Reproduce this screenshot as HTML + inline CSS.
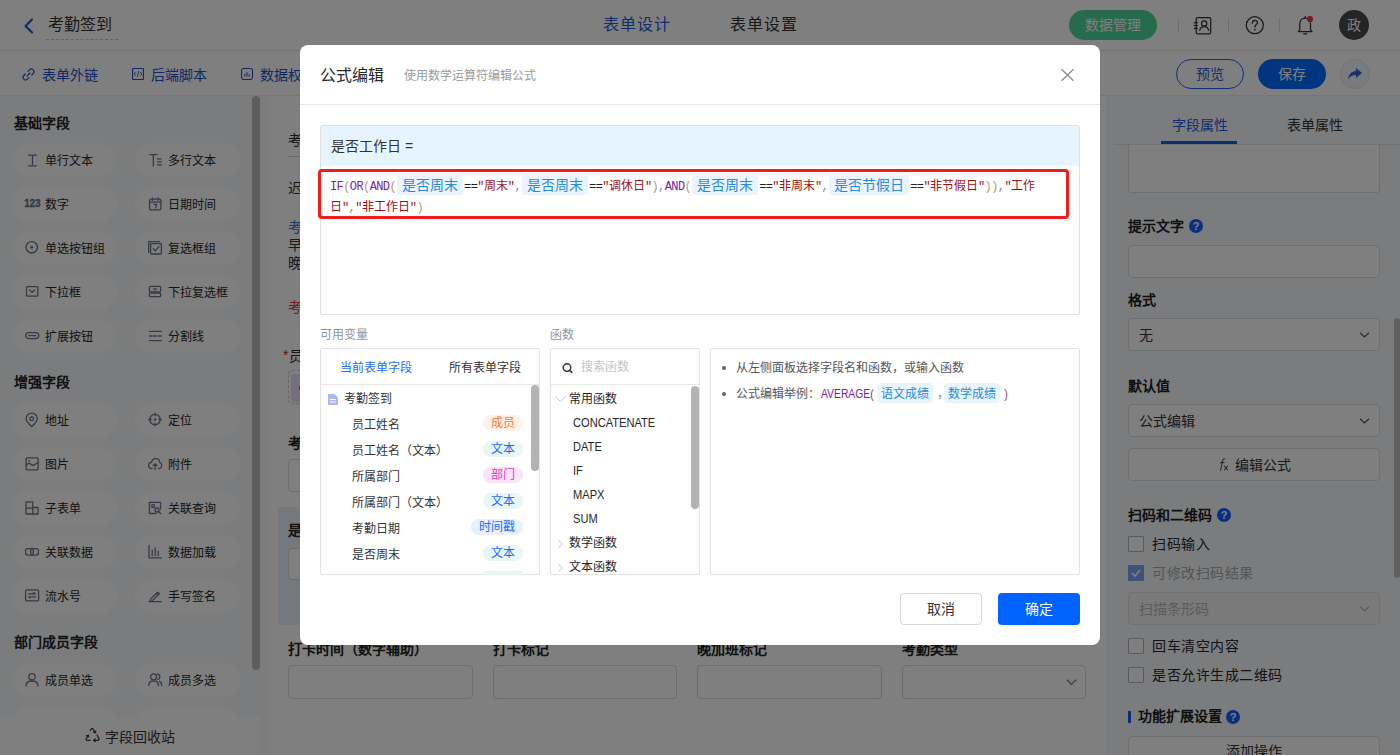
<!DOCTYPE html>
<html lang="zh-CN"><head><meta charset="utf-8">
<style>
*{box-sizing:border-box;margin:0;padding:0}
html,body{width:1400px;height:755px;overflow:hidden;background:#fff}
body{position:relative;font-family:"Liberation Sans",sans-serif;color:#333;font-size:14px}
.a{position:absolute;white-space:nowrap}
.t{position:absolute;white-space:nowrap;line-height:1}
svg{position:absolute;overflow:visible}
/* page */
#hdr{left:0;top:0;width:1400px;height:51px;background:#fff;border-bottom:1px solid #e6e6e6}
#tb{left:0;top:51px;width:1400px;height:45px;background:#fff;border-bottom:1px solid #ececec}
#side{left:0;top:96px;width:268px;height:659px;background:#f7f8fa}
.pill{position:absolute;width:105px;height:34px;border-radius:17px;background:#fff}
.pill span{position:absolute;left:33px;top:11px;font-size:12px;line-height:14px;color:#262626}
.sh{position:absolute;left:14px;font-size:14px;font-weight:bold;color:#222;line-height:14px}
#canvas{left:268px;top:96px;width:838px;height:659px;background:#fff}
#rp{left:1106px;top:96px;width:294px;height:659px;background:#f7f8fa}
#ov{left:0;top:0;width:1400px;height:755px;background:rgba(0,0,0,.5)}
#modal{left:300px;top:45px;width:800px;height:600px;background:#fff;border-radius:8px}
.box{position:absolute;border:1px solid #e3e3e3;border-radius:2px;background:#fff}
.tag{position:absolute;height:16px;border-radius:8px;font-size:12px;line-height:17px;text-align:center}
.vr{position:absolute;left:31px;font-size:12px;line-height:14px;color:#333}
.fn{position:absolute;left:22px;font-size:12px;line-height:14px;color:#262626;transform:scaleX(.925);transform-origin:0 0}
.fn.c{transform:none}
.mono{font-family:"Liberation Mono",monospace;font-size:12px;letter-spacing:-0.6px}
.mono i{font-style:normal;letter-spacing:0}
.sp{display:inline-block;width:0px}
.fp{display:inline-block;background:#eaf4fe;color:#2b8ad8;font-family:"Liberation Sans",sans-serif;font-size:14px;height:20px;line-height:20px;padding:0 5px;border-radius:3px;vertical-align:top;margin:-2px 1px 0 1px;letter-spacing:0}
.kw{color:#7a1ea0}
.pr{color:#b59a6a}
.st{color:#9c1212}
.op{color:#222}
.cm{color:#888}
.inp{position:absolute;border:1px solid #dcdcdc;border-radius:4px;background:#fff}
.rl{position:absolute;left:22px;font-size:14px;font-weight:bold;color:#1f1f1f;line-height:14px;margin-top:-1px}
.cb{position:absolute;left:22px;width:16px;height:16px;border:1px solid #aeb4c0;border-radius:1px;background:#fff}
.cbl{position:absolute;left:46px;font-size:14px;line-height:14px;color:#262626;letter-spacing:0.55px}
.q{position:absolute;width:14px;height:14px;border-radius:7px;background:#1060ff;color:#fff;font-size:11px;font-weight:bold;line-height:14px;text-align:center}
</style></head><body>

<!-- ============ HEADER ============ -->
<div id="hdr" class="a">
  <svg style="left:23px;top:18px" width="11" height="16" viewBox="0 0 11 16"><path d="M9 1.5 L2.5 8 L9 14.5" fill="none" stroke="#1f5bd6" stroke-width="2.2" stroke-linecap="round" stroke-linejoin="round"/></svg>
  <div class="t" style="left:48px;top:17px;font-size:16px;color:#333">考勤签到</div>
  <div class="a" style="left:46px;top:39px;width:72px;border-top:1px dashed #c8c8c8"></div>
  <div class="t" style="left:603px;top:17px;font-size:16px;color:#2659d8;letter-spacing:1px">表单设计</div>
  <div class="t" style="left:730px;top:17px;font-size:16px;color:#333;letter-spacing:1px">表单设置</div>
  <div class="a" style="left:1069px;top:10px;width:88px;height:30px;border-radius:15px;background:#4cd696"></div>
  <div class="t" style="left:1085px;top:18px;font-size:14px;color:#fff">数据管理</div>
  <div class="a" style="left:1178px;top:18px;width:1px;height:14px;background:#ddd"></div>
  <div class="a" style="left:1228px;top:18px;width:1px;height:14px;background:#ddd"></div>
  <div class="a" style="left:1279px;top:18px;width:1px;height:14px;background:#ddd"></div>
  <svg style="left:1188px;top:12px" width="30" height="26" viewBox="0 0 30 26"><g fill="none" stroke="#333" stroke-width="1.25" stroke-linecap="round"><rect x="8.2" y="5.6" width="14.5" height="16.2" rx="1.4"/><path d="M6.3 10.7h3M6.3 13.5h3M6.3 16.3h3"/><circle cx="16.2" cy="11.4" r="2.6"/><path d="M11.7 18.4 C12.3 15.6 14 14.6 16.2 14.6 C18.4 14.6 20.1 15.6 20.7 18.4"/></g></svg>
  <svg style="left:1240px;top:12px" width="30" height="26" viewBox="0 0 30 26"><g fill="none" stroke="#333" stroke-width="1.25" stroke-linecap="round"><circle cx="14.8" cy="13.2" r="8.5"/><path d="M12.3 11.2 C12.3 9.3 13.4 8.3 14.9 8.3 C16.4 8.3 17.4 9.3 17.4 10.7 C17.4 12.5 14.9 12.7 14.9 15"/></g><circle cx="14.9" cy="17.6" r="0.9" fill="#333"/></svg>
  <svg style="left:1290px;top:12px" width="30" height="26" viewBox="0 0 30 26"><g fill="none" stroke="#333" stroke-width="1.25" stroke-linecap="round" stroke-linejoin="round"><path d="M8.3 19.6 H22 L20.5 17.6 V12 C20.5 8.5 18.3 6.2 15.2 6.2 C12.1 6.2 9.8 8.5 9.8 12 V17.6 Z"/><path d="M13.6 21.8 H16.8"/><path d="M15.2 4.6 V5.6"/></g><circle cx="20" cy="7" r="3.1" fill="#ff3434"/></svg>
  <div class="a" style="left:1339px;top:10px;width:30px;height:30px;border-radius:15px;background:#4a4a4a"></div>
  <div class="t" style="left:1347px;top:18px;font-size:14px;color:#fff">政</div>
</div>

<!-- ============ TOOLBAR ============ -->
<div id="tb" class="a">
  <svg style="left:22px;top:17px" width="13" height="13" viewBox="0 0 13 13"><path d="M5 8 L8 5 M6 3.3 L7.5 1.8 a2.55 2.55 0 0 1 3.7 3.7 L9.7 7 M7 9.7 L5.5 11.2 a2.55 2.55 0 0 1 -3.7 -3.7 L3.3 6" fill="none" stroke="#2050c8" stroke-width="1.1" stroke-linecap="round"/></svg>
  <div class="t" style="left:42px;top:17px;font-size:14px;color:#2050c8">表单外链</div>
  <svg style="left:132px;top:17px" width="12" height="12" viewBox="0 0 13 13"><rect x="0.6" y="0.6" width="11.8" height="11.8" rx="0.6" fill="none" stroke="#2050c8" stroke-width="1.15"/><path d="M4 4.3 L2.3 6.5 L4 8.7 M9 4.3 L10.7 6.5 L9 8.7 M7.3 3.5 L5.7 9.5" fill="none" stroke="#2050c8" stroke-width="0.9"/></svg>
  <div class="t" style="left:151px;top:17px;font-size:14px;color:#2050c8">后端脚本</div>
  <svg style="left:241px;top:17px" width="12" height="12" viewBox="0 0 13 13"><rect x="0.6" y="0.6" width="11.8" height="11.8" rx="2" fill="none" stroke="#2050c8" stroke-width="1.15"/><path d="M4.2 9.3V6.3 M6.5 9.3V4.5 M8.8 9.3V6.8" stroke="#2050c8" stroke-width="1.1"/></svg>
  <div class="t" style="left:260px;top:17px;font-size:14px;color:#2050c8">数据权限</div>
  <div class="a" style="left:1176px;top:8px;width:68px;height:30px;border-radius:15px;border:1.5px solid #1a62f0;background:#fff"></div>
  <div class="t" style="left:1196px;top:16px;font-size:14px;color:#2a5bd8">预览</div>
  <div class="a" style="left:1258px;top:8px;width:68px;height:30px;border-radius:15px;background:#006cff"></div>
  <div class="t" style="left:1278px;top:16px;font-size:14px;color:#fff">保存</div>
  <div class="a" style="left:1340px;top:8px;width:30px;height:30px;border-radius:15px;background:#f4f7ff;border:1px solid #dfe7fb"></div>
  <svg style="left:1347px;top:16px" width="16" height="14" viewBox="0 0 16 14"><path d="M9 1 L15 6 L9 11 V8 C5 8 2.5 9.5 1 12.5 C1.5 7.5 4.5 4.5 9 4 Z" fill="#2a63e0"/></svg>
</div>

<!-- ============ SIDEBAR ============ -->
<div id="side" class="a">
  <div class="sh" style="top:20px">基础字段</div>
  <div class="pill" style="left:12px;top:47px"><svg style="left:13px;top:10px" width="14" height="14" viewBox="0 0 14 14"><path d="M3.5 2.2h8M7.5 2.2v10.6M3.5 12.8h8" fill="none" stroke="#6b7489" stroke-width="1.3" stroke-linecap="round" stroke-linejoin="round"/></svg><span>单行文本</span></div>
  <div class="pill" style="left:135px;top:47px"><svg style="left:13px;top:10px" width="14" height="14" viewBox="0 0 14 14"><path d="M1.7 1.6H9M5.3 1.6V13M9.5 5.8h3.7M9.5 8.8h3.7M9.5 11.8h3.7" fill="none" stroke="#6b7489" stroke-width="1.3" stroke-linecap="round" stroke-linejoin="round"/></svg><span>多行文本</span></div>
  <div class="pill" style="left:12px;top:91px"><svg style="left:13px;top:10px" width="14" height="14" viewBox="0 0 14 14"><text x="-0.8" y="10.2" font-family="Liberation Sans" font-weight="700" font-size="10" fill="#6b7489" stroke="#6b7489" stroke-width="0.35" letter-spacing="-0.2">123</text></svg><span>数字</span></div>
  <div class="pill" style="left:135px;top:91px"><svg style="left:13px;top:10px" width="14" height="14" viewBox="0 0 14 14"><rect x="1.6" y="2.2" width="11.3" height="10.6" rx="1.3" fill="none" stroke="#6b7489" stroke-width="1.3" stroke-linecap="round" stroke-linejoin="round"/><path d="M1.6 5.2h11.3M4.5 0.8v2.6M10 0.8v2.6M5.8 7.4h3L7.3 11" fill="none" stroke="#6b7489" stroke-width="1.3" stroke-linecap="round" stroke-linejoin="round"/></svg><span>日期时间</span></div>
  <div class="pill" style="left:12px;top:135px"><svg style="left:13px;top:10px" width="14" height="14" viewBox="0 0 14 14"><circle cx="6.7" cy="6.3" r="5.7" fill="none" stroke="#6b7489" stroke-width="1.3" stroke-linecap="round" stroke-linejoin="round"/><circle cx="6.7" cy="6.3" r="1.4" fill="#6b7489"/></svg><span>单选按钮组</span></div>
  <div class="pill" style="left:135px;top:135px"><svg style="left:13px;top:10px" width="14" height="14" viewBox="0 0 14 14"><path d="M0.7 11.5V0.7H11.5" fill="none" stroke="#6b7489" stroke-width="1.3" stroke-linecap="round" stroke-linejoin="round"/><rect x="2.6" y="2.6" width="10.8" height="10.4" rx="0.5" fill="none" stroke="#6b7489" stroke-width="1.3" stroke-linecap="round" stroke-linejoin="round"/><path d="M5.2 7.6 L7.3 9.7 L11 5.6" fill="none" stroke="#6b7489" stroke-width="1.3" stroke-linecap="round" stroke-linejoin="round"/></svg><span>复选框组</span></div>
  <div class="pill" style="left:12px;top:179px"><svg style="left:13px;top:10px" width="14" height="14" viewBox="0 0 14 14"><rect x="1.5" y="1.6" width="11.3" height="9.5" rx="0.8" fill="none" stroke="#6b7489" stroke-width="1.3" stroke-linecap="round" stroke-linejoin="round"/><path d="M4.6 5 L7.1 7.3 L9.6 5" fill="none" stroke="#6b7489" stroke-width="1.3" stroke-linecap="round" stroke-linejoin="round"/></svg><span>下拉框</span></div>
  <div class="pill" style="left:135px;top:179px"><svg style="left:13px;top:10px" width="14" height="14" viewBox="0 0 14 14"><rect x="1.4" y="1.4" width="11.2" height="5.6" rx="1" fill="none" stroke="#6b7489" stroke-width="1.3" stroke-linecap="round" stroke-linejoin="round"/><rect x="1.4" y="8.1" width="11.2" height="3.6" rx="1" fill="none" stroke="#6b7489" stroke-width="1.3" stroke-linecap="round" stroke-linejoin="round"/><path d="M5.8 3.8 L7 5 L8.2 3.8" fill="none" stroke="#6b7489" stroke-width="1.3" stroke-linecap="round" stroke-linejoin="round"/></svg><span>下拉复选框</span></div>
  <div class="pill" style="left:12px;top:223px"><svg style="left:13px;top:10px" width="14" height="14" viewBox="0 0 14 14"><rect x="0.8" y="3.6" width="13" height="6" rx="3" fill="none" stroke="#6b7489" stroke-width="1.3" stroke-linecap="round" stroke-linejoin="round"/><path d="M3.8 6.6h7" fill="none" stroke="#6b7489" stroke-width="1.3" stroke-linecap="round" stroke-linejoin="round"/></svg><span>扩展按钮</span></div>
  <div class="pill" style="left:135px;top:223px"><svg style="left:13px;top:10px" width="14" height="14" viewBox="0 0 14 14"><path d="M1.5 2.3h11.7M1.5 7h2.8M5.8 7h2.8M10.2 7h3M1.5 11.7h11.7" fill="none" stroke="#6b7489" stroke-width="1.3" stroke-linecap="round" stroke-linejoin="round"/></svg><span>分割线</span></div>
  <div class="sh" style="top:279px">增强字段</div>
  <div class="pill" style="left:12px;top:307px"><svg style="left:13px;top:10px" width="14" height="14" viewBox="0 0 14 14"><path d="M6.7 13.6 C3 10.2 1.1 7.8 1.1 5.7 A5.6 5.6 0 0 1 12.3 5.7 C12.3 7.8 10.4 10.2 6.7 13.6 Z" fill="none" stroke="#6b7489" stroke-width="1.3" stroke-linecap="round" stroke-linejoin="round"/><circle cx="6.7" cy="5.8" r="1.8" fill="none" stroke="#6b7489" stroke-width="1.3" stroke-linecap="round" stroke-linejoin="round"/></svg><span>地址</span></div>
  <div class="pill" style="left:135px;top:307px"><svg style="left:13px;top:10px" width="14" height="14" viewBox="0 0 14 14"><circle cx="7" cy="6.5" r="5.2" fill="none" stroke="#6b7489" stroke-width="1.3" stroke-linecap="round" stroke-linejoin="round"/><path d="M7 0.2v2.4M7 10.4v2.4M0.7 6.5h2.4M10.9 6.5h2.4" fill="none" stroke="#6b7489" stroke-width="1.3" stroke-linecap="round" stroke-linejoin="round"/><circle cx="7" cy="6.5" r="1.2" fill="#6b7489"/></svg><span>定位</span></div>
  <div class="pill" style="left:12px;top:351px"><svg style="left:13px;top:10px" width="14" height="14" viewBox="0 0 14 14"><rect x="1.1" y="0.8" width="12" height="12" rx="1.3" fill="none" stroke="#6b7489" stroke-width="1.3" stroke-linecap="round" stroke-linejoin="round"/><path d="M1.3 8.5 C3 6 4.5 5.5 6 7.5 C7.5 9.3 9.5 8 12.9 5.5" fill="none" stroke="#6b7489" stroke-width="1.3" stroke-linecap="round" stroke-linejoin="round"/><circle cx="4" cy="3.8" r="0.9" fill="#6b7489"/></svg><span>图片</span></div>
  <div class="pill" style="left:135px;top:351px"><svg style="left:13px;top:10px" width="14" height="14" viewBox="0 0 14 14"><path d="M4 11.5 C2 11.5 0.6 10.2 0.6 8.4 C0.6 6.7 1.9 5.4 3.5 5.3 C4 3 5.6 1.7 7.6 1.7 C9.9 1.7 11.6 3.4 11.8 5.6 C13 5.9 13.7 7 13.7 8.3 C13.7 10.1 12.4 11.5 10.4 11.5" fill="none" stroke="#6b7489" stroke-width="1.3" stroke-linecap="round" stroke-linejoin="round"/><path d="M7.1 12.5V6.8M5.2 8.6 L7.1 6.8 L9 8.6" fill="none" stroke="#6b7489" stroke-width="1.3" stroke-linecap="round" stroke-linejoin="round"/></svg><span>附件</span></div>
  <div class="pill" style="left:12px;top:395px"><svg style="left:13px;top:10px" width="14" height="14" viewBox="0 0 14 14"><path d="M1 0.9 H7.8 V6.5 H13 V13 H1 Z M1 7.2 H7.8 M7.8 6.5 V13" fill="none" stroke="#6b7489" stroke-width="1.3" stroke-linecap="round" stroke-linejoin="round"/></svg><span>子表单</span></div>
  <div class="pill" style="left:135px;top:395px"><svg style="left:13px;top:10px" width="14" height="14" viewBox="0 0 14 14"><path d="M12.5 8 V1.4 H1.4 V12.5 H8" fill="none" stroke="#6b7489" stroke-width="1.3" stroke-linecap="round" stroke-linejoin="round"/><path d="M3.8 3.8h2.6v2.6H3.8z" fill="none" stroke="#6b7489" stroke-width="1.3" stroke-linecap="round" stroke-linejoin="round"/><circle cx="9" cy="9" r="2" fill="none" stroke="#6b7489" stroke-width="1.3" stroke-linecap="round" stroke-linejoin="round"/><path d="M10.5 10.5 L12.8 12.8" fill="none" stroke="#6b7489" stroke-width="1.3" stroke-linecap="round" stroke-linejoin="round"/></svg><span>关联查询</span></div>
  <div class="pill" style="left:12px;top:439px"><svg style="left:13px;top:10px" width="14" height="14" viewBox="0 0 14 14"><rect x="0.6" y="3.6" width="7.6" height="6.5" rx="2" fill="none" stroke="#6b7489" stroke-width="1.3" stroke-linecap="round" stroke-linejoin="round"/><rect x="5.8" y="3.6" width="7.6" height="6.5" rx="2" fill="none" stroke="#6b7489" stroke-width="1.3" stroke-linecap="round" stroke-linejoin="round"/></svg><span>关联数据</span></div>
  <div class="pill" style="left:135px;top:439px"><svg style="left:13px;top:10px" width="14" height="14" viewBox="0 0 14 14"><path d="M1 0.3V12.8H13.4M4.2 5.2v5.5M7.2 3v7.7M10.2 6.2v4.5" fill="none" stroke="#6b7489" stroke-width="1.3" stroke-linecap="round" stroke-linejoin="round"/></svg><span>数据加载</span></div>
  <div class="pill" style="left:12px;top:483px"><svg style="left:13px;top:10px" width="14" height="14" viewBox="0 0 14 14"><rect x="0.6" y="0.9" width="13" height="11" rx="1.3" fill="none" stroke="#6b7489" stroke-width="1.3" stroke-linecap="round" stroke-linejoin="round"/><path d="M3.5 4.8h6.8l-1.6-1.3M10.5 7.8H3.7l1.6 1.3" fill="none" stroke="#6b7489" stroke-width="1.3" stroke-linecap="round" stroke-linejoin="round"/></svg><span>流水号</span></div>
  <div class="pill" style="left:135px;top:483px"><svg style="left:13px;top:10px" width="14" height="14" viewBox="0 0 14 14"><path d="M2.5 10.2 L9.6 3.1 L11.3 4.8 L4.2 11.9 L2.2 12.3 Z M8.4 4.3 L10.1 6" fill="none" stroke="#6b7489" stroke-width="1.3" stroke-linecap="round" stroke-linejoin="round"/><path d="M1 12.6h12.4" fill="none" stroke="#6b7489" stroke-width="1.3" stroke-linecap="round" stroke-linejoin="round"/></svg><span>手写签名</span></div>
  <div class="sh" style="top:539px">部门成员字段</div>
  <div class="pill" style="left:12px;top:567px"><svg style="left:13px;top:10px" width="14" height="14" viewBox="0 0 14 14"><circle cx="7" cy="3.8" r="3.2" fill="none" stroke="#6b7489" stroke-width="1.3" stroke-linecap="round" stroke-linejoin="round"/><path d="M1 13 C1 9.8 3.6 8 7 8 C10.4 8 13 9.8 13 13" fill="none" stroke="#6b7489" stroke-width="1.3" stroke-linecap="round" stroke-linejoin="round"/></svg><span>成员单选</span></div>
  <div class="pill" style="left:135px;top:567px"><svg style="left:13px;top:10px" width="14" height="14" viewBox="0 0 14 14"><circle cx="5.6" cy="3.8" r="3" fill="none" stroke="#6b7489" stroke-width="1.3" stroke-linecap="round" stroke-linejoin="round"/><path d="M0.8 12.5 C0.8 9.6 2.8 7.9 5.6 7.9 C8.4 7.9 10.4 9.6 10.4 12.5M9.4 0.9 C10.9 1.2 11.9 2.4 11.9 3.8 C11.9 5.1 11 6.2 9.7 6.6M11.4 8.3 C12.9 9 13.8 10.5 13.8 12.5" fill="none" stroke="#6b7489" stroke-width="1.3" stroke-linecap="round" stroke-linejoin="round"/></svg><span>成员多选</span></div>
  <div class="pill" style="left:12px;top:611px"></div>
  <div class="pill" style="left:135px;top:611px"></div>
  <div class="a" style="left:252px;top:0;width:8px;height:574px;border-radius:4px;background:#bdbdbd"></div>
  <div class="a" style="left:0;top:621px;width:260px;height:38px;background:#fff"></div>
  <svg style="left:85px;top:632px" width="15" height="14" viewBox="0 0 15 14"><g fill="none" stroke="#333" stroke-width="1.2" stroke-linecap="round" stroke-linejoin="round"><path d="M5.3 2.6 L6.3 1 Q7.2 -0.2 8.1 1 L10.2 4.6"/><path d="M8.6 4.3 L10.3 4.7 L10.9 3"/><path d="M12 7 L13.8 10.2 Q14.5 11.6 13 12.3 L8.8 12.3"/><path d="M10.2 10.9 L8.7 12.3 L10.2 13.6"/><path d="M5.2 12.3 L2 12.3 Q0.5 12.2 1.2 10.7 L3.2 7.3"/><path d="M1.4 7.8 L3.2 7.2 L3.8 8.9"/></g></svg>
  <div class="t" style="left:105px;top:634px;font-size:14px;color:#333">字段回收站</div>
</div>

<!-- ============ CANVAS ============ -->
<div id="canvas" class="a">
  <div class="t" style="left:20px;top:37px;font-size:14px;color:#222">考勤签到</div>
  <div class="a" style="left:20px;top:60px;width:800px;height:1px;background:#d6d6d6"></div>
  <div class="t" style="left:20px;top:85px;font-size:14px;color:#333">迟到</div>
  <div class="t" style="left:20px;top:124px;font-size:14px;color:#2a7ad8">考勤</div>
  <div class="t" style="left:20px;top:142px;font-size:14px;color:#333">早上</div>
  <div class="t" style="left:20px;top:160px;font-size:14px;color:#333">晚上</div>
  <div class="t" style="left:20px;top:204px;font-size:14px;color:#d83b3b">考勤</div>
  <div class="t" style="left:15px;top:252px;font-size:14px;color:#e02020">*</div>
  <div class="t" style="left:21px;top:253px;font-size:14px;color:#222">员工</div>
  <div class="a" style="left:20px;top:274px;width:180px;height:34px;border:1px dashed #cfcfcf;border-radius:4px"></div>
  <div class="a" style="left:23px;top:278px;width:60px;height:28px;border-radius:3px;background:#e9def0"></div><div class="a" style="left:31px;top:289px;width:6px;height:6px;border-radius:3px;background:#2fb36a"></div>
  <div class="t" style="left:20px;top:340px;font-size:14px;font-weight:bold;color:#222">考勤</div>
  <div class="inp" style="left:20px;top:363px;width:184px;height:33px"></div>
  <div class="a" style="left:10px;top:411px;width:820px;height:118px;background:#eaf0fb"></div>
  <div class="t" style="left:20px;top:427px;font-size:14px;font-weight:bold;color:#222">是否</div>
  <div class="inp" style="left:20px;top:452px;width:184px;height:32px"></div>
  <div class="t" style="left:20px;top:546px;font-size:14px;font-weight:bold;color:#222">打卡时间（数字辅助）</div>
  <div class="t" style="left:225px;top:546px;font-size:14px;font-weight:bold;color:#222">打卡标记</div>
  <div class="t" style="left:429px;top:546px;font-size:14px;font-weight:bold;color:#222">晚加班标记</div>
  <div class="t" style="left:634px;top:546px;font-size:14px;font-weight:bold;color:#222">考勤类型</div>
  <div class="inp" style="left:20px;top:569px;width:185px;height:34px"></div>
  <div class="inp" style="left:225px;top:569px;width:184px;height:34px"></div>
  <div class="inp" style="left:429px;top:569px;width:185px;height:34px"></div>
  <div class="inp" style="left:634px;top:569px;width:184px;height:34px"></div>
  <svg style="left:798px;top:583px" width="11" height="6" viewBox="0 0 11 6"><path d="M0.8 0.8 L5.5 5.2 L10.2 0.8" fill="none" stroke="#777" stroke-width="1.2"/></svg>
</div>

<!-- ============ RIGHT PANEL ============ -->
<div id="rp" class="a">
  <div class="t" style="left:66px;top:22px;font-size:14px;color:#2659d8">字段属性</div>
  <div class="t" style="left:181px;top:22px;font-size:14px;color:#333">表单属性</div>
  <div class="a" style="left:8px;top:48px;width:286px;height:1px;background:#e3e3e3"></div>
  <div class="a" style="left:55px;top:45px;width:76px;height:3px;background:#1a5ae0"></div>
  <div class="inp" style="left:22px;top:49px;width:252px;height:48px;border-top:none;border-radius:0 0 4px 4px"></div>
  <div class="rl" style="top:124px">提示文字</div>
  <div class="q" style="left:83px;top:123px">?</div>
  <div class="inp" style="left:22px;top:149px;width:252px;height:33px"></div>
  <div class="rl" style="top:198px">格式</div>
  <div class="inp" style="left:22px;top:222px;width:252px;height:33px"></div>
  <div class="t" style="left:33px;top:232px;font-size:14px;color:#333">无</div>
  <svg style="left:253px;top:236px" width="11" height="6" viewBox="0 0 11 6"><path d="M1 0.8 L5.5 5 L10 0.8" fill="none" stroke="#555" stroke-width="1.2"/></svg>
  <div class="rl" style="top:284px">默认值</div>
  <div class="inp" style="left:22px;top:308px;width:252px;height:33px"></div>
  <div class="t" style="left:33px;top:318px;font-size:14px;color:#333">公式编辑</div>
  <svg style="left:253px;top:322px" width="11" height="6" viewBox="0 0 11 6"><path d="M1 0.8 L5.5 5 L10 0.8" fill="none" stroke="#555" stroke-width="1.2"/></svg>
  <div class="inp" style="left:22px;top:352px;width:252px;height:33px"></div>
  <svg style="left:112px;top:362px" width="12" height="13" viewBox="0 0 12 13"><path d="M6.8 0.8 C5.6 0.6 4.9 1.2 4.6 2.6 L2.6 12.3 M2.6 4.6 H6" fill="none" stroke="#555" stroke-width="1.05" stroke-linecap="round"/><path d="M6.5 8 L9.6 11.8 M9.6 8 L6.5 11.8" fill="none" stroke="#555" stroke-width="1.05" stroke-linecap="round"/></svg>
  <div class="t" style="left:129px;top:362px;font-size:14px;color:#333">编辑公式</div>
  <div class="rl" style="top:413px">扫码和二维码</div>
  <div class="q" style="left:111px;top:412px">?</div>
  <div class="cb" style="top:440px"></div>
  <div class="cbl" style="top:441px">扫码输入</div>
  <div class="cb" style="top:469px;background:#7aa5f2;border-color:#7aa5f2"></div>
  <svg style="left:25px;top:473px" width="10" height="8" viewBox="0 0 10 8"><path d="M1 4 L4 7 L9 1" fill="none" stroke="#fff" stroke-width="1.6"/></svg>
  <div class="cbl" style="top:470px;color:#aaa">可修改扫码结果</div>
  <div class="inp" style="left:22px;top:496px;width:252px;height:33px;background:#f5f5f5;border-color:#e3e3e3"></div>
  <div class="t" style="left:33px;top:506px;font-size:14px;color:#b8b8b8">扫描条形码</div>
  <svg style="left:253px;top:510px" width="11" height="6" viewBox="0 0 11 6"><path d="M1 0.8 L5.5 5 L10 0.8" fill="none" stroke="#bbb" stroke-width="1.2"/></svg>
  <div class="cb" style="top:542px"></div>
  <div class="cbl" style="top:543px">回车清空内容</div>
  <div class="cb" style="top:571px"></div>
  <div class="cbl" style="top:572px">是否允许生成二维码</div>
  <div class="a" style="left:22px;top:615px;width:3px;height:12px;background:#1a5ae0"></div>
  <div class="rl" style="left:32px;top:614px">功能扩展设置</div>
  <div class="q" style="left:120px;top:614px">?</div>
  <div class="inp" style="left:22px;top:640px;width:252px;height:33px"></div>
  <div class="t" style="left:120px;top:648px;font-size:14px;color:#333">添加操作</div>
  <div class="a" style="left:288px;top:222px;width:6px;height:260px;border-radius:3px;background:#c0c0c0"></div>
</div>

<div id="ov" class="a"></div>

<!-- ============ MODAL ============ -->
<div id="modal" class="a">
  <div class="t" style="left:20px;top:23px;font-size:16px;color:#262626">公式编辑</div>
  <div class="t" style="left:104px;top:25px;font-size:12px;color:#9a9a9a">使用数学运算符编辑公式</div>
  <svg style="left:761px;top:24px" width="13" height="12" viewBox="0 0 13 12"><path d="M0.5 0.3 L12.5 11.7 M12.5 0.3 L0.5 11.7" stroke="#8a8a8a" stroke-width="1.2"/></svg>
  <div class="a" style="left:0;top:59px;width:800px;height:1px;background:#e8e8e8"></div>

  <div class="box" style="left:20px;top:80px;width:760px;height:190px;border-color:#e0e0e0"></div>
  <div class="a" style="left:21px;top:81px;width:758px;height:40px;background:#e6f4ff"></div>
  <div class="t" style="left:31px;top:94px;font-size:14px;color:#333">是否工作日 =</div>
  <div class="a mono" style="left:30px;top:132px;width:740px;line-height:21px;white-space:nowrap"><span class="kw">IF</span><span class="pr">(</span><span class="kw">OR</span><span class="pr">(</span><span class="kw">AND</span><span class="pr">(</span><span class="fp">是否周末</span><span class="op">==</span><span class="st">"<i>周末</i>"</span><span class="cm">,</span><span class="sp"></span><span class="fp">是否周末</span><span class="op">==</span><span class="st">"<i>调休日</i>"</span><span class="pr">)</span><span class="cm">,</span><span class="kw">AND</span><span class="pr">(</span><span class="fp">是否周末</span><span class="op">==</span><span class="st">"<i>非周末</i>"</span><span class="cm">,</span><span class="sp"></span><span class="fp">是否节假日</span><span class="op">==</span><span class="st">"<i>非节假日</i>"</span><span class="pr">))</span><span class="cm">,</span><span class="st">"<i>工作</i></span><br><span class="st"><i>日</i>"</span><span class="cm">,</span><span class="st">"<i>非工作日</i>"</span><span class="pr">)</span></div>
  <div class="a" style="left:17.5px;top:124px;width:751px;height:50px;border:3px solid #f21c1c;border-radius:4px"></div>

  <div class="t" style="left:20px;top:284px;font-size:12px;color:#8b95a7">可用变量</div>
  <div class="t" style="left:250px;top:284px;font-size:12px;color:#8b95a7">函数</div>

  <div class="box" style="left:20px;top:303px;width:220px;height:227px">
    <div class="t" style="left:19px;top:13px;font-size:12px;color:#1f6bff">当前表单字段</div>
    <div class="t" style="left:128px;top:13px;font-size:12px;color:#333">所有表单字段</div>
    <div class="a" style="left:0;top:35px;width:218px;height:1px;background:#e6e6e6"></div>
    <svg style="left:7px;top:45px" width="10" height="11" viewBox="0 0 10 11"><path d="M0 0 H6.5 L10 3.5 V11 H0 Z" fill="#a9b8f5"/><path d="M2 5.5 H8 M2 8 H8" stroke="#fff" stroke-width="1"/></svg>
    <div class="vr" style="left:23px;top:43px">考勤签到</div>
    <div class="vr" style="top:69px">员工姓名</div>
    <div class="tag" style="left:162px;top:66px;width:40px;background:#fff0e8;color:#f57c2b">成员</div>
    <div class="vr" style="top:95px">员工姓名（文本）</div>
    <div class="tag" style="left:162px;top:92px;width:40px;background:#e6f7f5;color:#1f6bff">文本</div>
    <div class="vr" style="top:121px">所属部门</div>
    <div class="tag" style="left:162px;top:118px;width:40px;background:#fbe3f8;color:#d43ac4">部门</div>
    <div class="vr" style="top:147px">所属部门（文本）</div>
    <div class="tag" style="left:162px;top:144px;width:40px;background:#e6f7f5;color:#1f6bff">文本</div>
    <div class="vr" style="top:173px">考勤日期</div>
    <div class="tag" style="left:150px;top:170px;width:52px;background:#e8efff;color:#1f6bff">时间戳</div>
    <div class="vr" style="top:199px">是否周末</div>
    <div class="tag" style="left:162px;top:196px;width:40px;background:#e6f7f5;color:#1f6bff">文本</div>
    <div class="tag" style="left:162px;top:222px;width:40px;height:4px;background:#e6f7f5"></div>
    <div class="a" style="left:210px;top:36px;width:8px;height:86px;border-radius:4px;background:#b3b3b3"></div>
  </div>

  <div class="box" style="left:250px;top:303px;width:150px;height:227px">
    <svg style="left:11px;top:14px" width="11" height="10" viewBox="0 0 11 10"><circle cx="5" cy="4.6" r="3.8" fill="none" stroke="#333" stroke-width="1.5"/><path d="M7.6 7.3 L9.8 9.3" stroke="#333" stroke-width="1.6" stroke-linecap="round"/></svg>
    <div class="t" style="left:30px;top:12px;font-size:12px;color:#c4c4c4">搜索函数</div>
    <div class="a" style="left:0;top:35px;width:148px;height:1px;background:#e6e6e6"></div>
    <svg style="left:4px;top:47px" width="11" height="6" viewBox="0 0 11 6"><path d="M0.5 0.5 L5.5 5.5 L10.5 0.5" fill="none" stroke="#c4c4c4" stroke-width="1"/></svg>
    <div class="fn c" style="left:18px;top:43px">常用函数</div>
    <div class="fn" style="top:67px">CONCATENATE</div>
    <div class="fn" style="top:91px">DATE</div>
    <div class="fn" style="top:115px">IF</div>
    <div class="fn" style="top:139px">MAPX</div>
    <div class="fn" style="top:163px">SUM</div>
    <svg style="left:7px;top:191px" width="5" height="8" viewBox="0 0 5 8"><path d="M0.5 0.5 L4.5 4 L0.5 7.5" fill="none" stroke="#c4c4c4" stroke-width="1"/></svg>
    <div class="fn c" style="left:18px;top:187px">数学函数</div>
    <svg style="left:7px;top:215px" width="5" height="8" viewBox="0 0 5 8"><path d="M0.5 0.5 L4.5 4 L0.5 7.5" fill="none" stroke="#c4c4c4" stroke-width="1"/></svg>
    <div class="fn c" style="left:18px;top:211px">文本函数</div>
    <div class="a" style="left:140px;top:37px;width:8px;height:123px;border-radius:4px;background:#b3b3b3"></div>
  </div>

  <div class="box" style="left:410px;top:303px;width:370px;height:227px">
    <div class="a" style="left:11px;top:17px;width:4px;height:4px;border-radius:2px;background:#5c6470"></div>
    <div class="t" style="left:25px;top:13px;font-size:12px;color:#555">从左侧面板选择字段名和函数，或输入函数</div>
    <div class="a" style="left:11px;top:43px;width:4px;height:4px;border-radius:2px;background:#5c6470"></div>
    <div class="t" style="left:25px;top:39px;font-size:12px;color:#555">公式编辑举例：</div>
    <div class="t" style="left:109.5px;top:39px;font-size:12px;color:#7a1ea0;transform:scaleX(.86);transform-origin:0 0">AVERAGE(</div>
    <div class="a" style="left:166px;top:34px;width:56px;height:20px;border-radius:4px;background:#eaf4fe"></div>
    <div class="t" style="left:170px;top:39px;font-size:12px;color:#2b8ad8">语文成绩</div>
    <div class="t" style="left:226px;top:39px;font-size:12px;color:#888">，</div>
    <div class="a" style="left:233px;top:34px;width:56px;height:20px;border-radius:4px;background:#eaf4fe"></div>
    <div class="t" style="left:237px;top:39px;font-size:12px;color:#2b8ad8">数学成绩</div>
    <div class="t" style="left:293px;top:39px;font-size:12px;color:#8b5a9a">)</div>
  </div>

  <div class="a" style="left:600px;top:548px;width:82px;height:32px;border:1px solid #d6d6d6;border-radius:4px;background:#fff"></div>
  <div class="t" style="left:627px;top:557px;font-size:14px;color:#333">取消</div>
  <div class="a" style="left:698px;top:548px;width:82px;height:32px;border-radius:4px;background:#0062ff"></div>
  <div class="t" style="left:725px;top:557px;font-size:14px;color:#fff">确定</div>
</div>

</body></html>
